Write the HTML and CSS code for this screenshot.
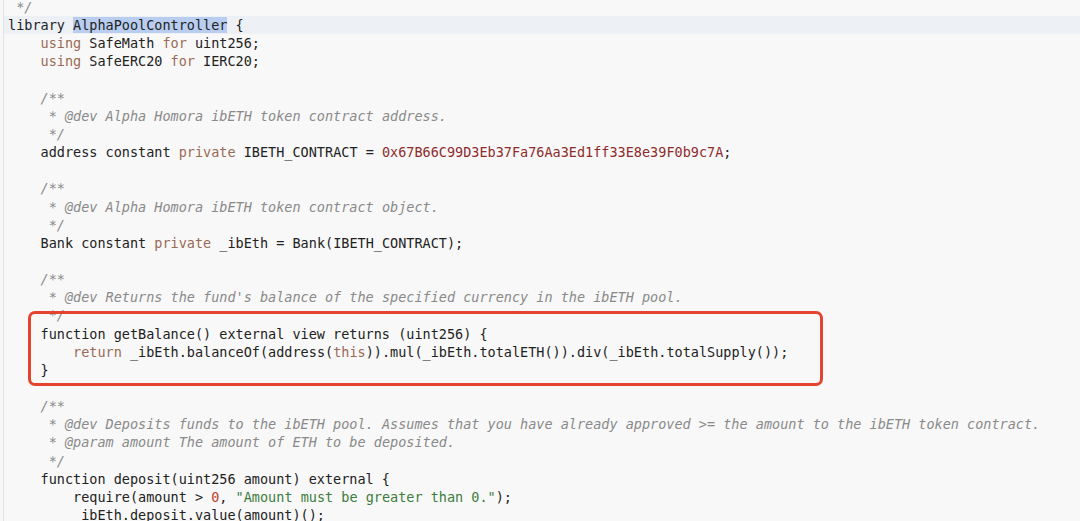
FILE: index.html
```html
<!DOCTYPE html>
<html>
<head>
<meta charset="utf-8">
<link rel="stylesheet" href="styles.css">
</head>
<body>
<div class="editor">
<div class="code">
<div class="ln"> <span class="c">*/</span></div>
<div class="ln cur">library <span class="sel">AlphaPoolController</span> {</div>
<div class="ln">    <span class="k">using</span> SafeMath <span class="k">for</span> uint256;</div>
<div class="ln">    <span class="k">using</span> SafeERC20 <span class="k">for</span> IERC20;</div>
<div class="ln"> </div>
<div class="ln">    <span class="c">/**</span></div>
<div class="ln">    <span class="c"> * @dev Alpha Homora ibETH token contract address.</span></div>
<div class="ln">    <span class="c"> */</span></div>
<div class="ln">    address constant <span class="k">private</span> IBETH_CONTRACT = <span class="h">0x67B66C99D3Eb37Fa76Aa3Ed1ff33E8e39F0b9c7A</span>;</div>
<div class="ln"> </div>
<div class="ln">    <span class="c">/**</span></div>
<div class="ln">    <span class="c"> * @dev Alpha Homora ibETH token contract object.</span></div>
<div class="ln">    <span class="c"> */</span></div>
<div class="ln">    Bank constant <span class="k">private</span> _ibEth = Bank(IBETH_CONTRACT);</div>
<div class="ln"> </div>
<div class="ln">    <span class="c">/**</span></div>
<div class="ln">    <span class="c"> * @dev Returns the fund's balance of the specified currency in the ibETH pool.</span></div>
<div class="ln">    <span class="c"> */</span></div>
<div class="ln">    function getBalance() external view returns (uint256) {</div>
<div class="ln">        <span class="k">return</span> _ibEth.balanceOf(address(<span class="k">this</span>)).mul(_ibEth.totalETH()).div(_ibEth.totalSupply());</div>
<div class="ln">    }</div>
<div class="ln"> </div>
<div class="ln">    <span class="c">/**</span></div>
<div class="ln">    <span class="c"> * @dev Deposits funds to the ibETH pool. Assumes that you have already approved &gt;= the amount to the ibETH token contract.</span></div>
<div class="ln">    <span class="c"> * @param amount The amount of ETH to be deposited.</span></div>
<div class="ln">    <span class="c"> */</span></div>
<div class="ln">    function deposit(uint256 amount) external {</div>
<div class="ln">        require(amount &gt; <span class="n">0</span>, <span class="s">"Amount must be greater than 0."</span>);</div>
<div class="ln">        _ibEth.deposit.value(amount)();</div>
</div>
<div class="box"></div>
</div>
</body>
</html>
```

FILE: styles.css
```css
html, body {
  margin: 0;
  padding: 0;
  background: #f8f8f8;
  overflow: hidden;
}
.editor {
  position: relative;
  width: 1077px;
  height: 521px;
  overflow: hidden;
  border-left: 1px solid #e2e2e2;
  margin-left: 3px;
  box-sizing: border-box;
}
.code {
  margin-top: -2px;
  font-family: "DejaVu Sans Mono", monospace;
  font-size: 13.5px;
  line-height: 18.15px;
  color: #222;
  padding-left: 4px;
}
.ln {
  white-space: pre;
  height: 18.15px;
}
.cur {
  background: #edf0f5;
  margin-left: -4px;
  padding-left: 4px;
}
.sel {
  background: #b9cdf0;
}
.k { color: #9a6a55; }
.c { color: #8a8a8a; font-style: italic; }
.h { color: #8e2b2b; }
.n { color: #c0392b; }
.s { color: #3d7d3d; }
.box {
  position: absolute;
  left: 24px;
  top: 311px;
  width: 795px;
  height: 75px;
  border: 3px solid #e4442f;
  border-radius: 7px;
  box-sizing: border-box;
}
```
